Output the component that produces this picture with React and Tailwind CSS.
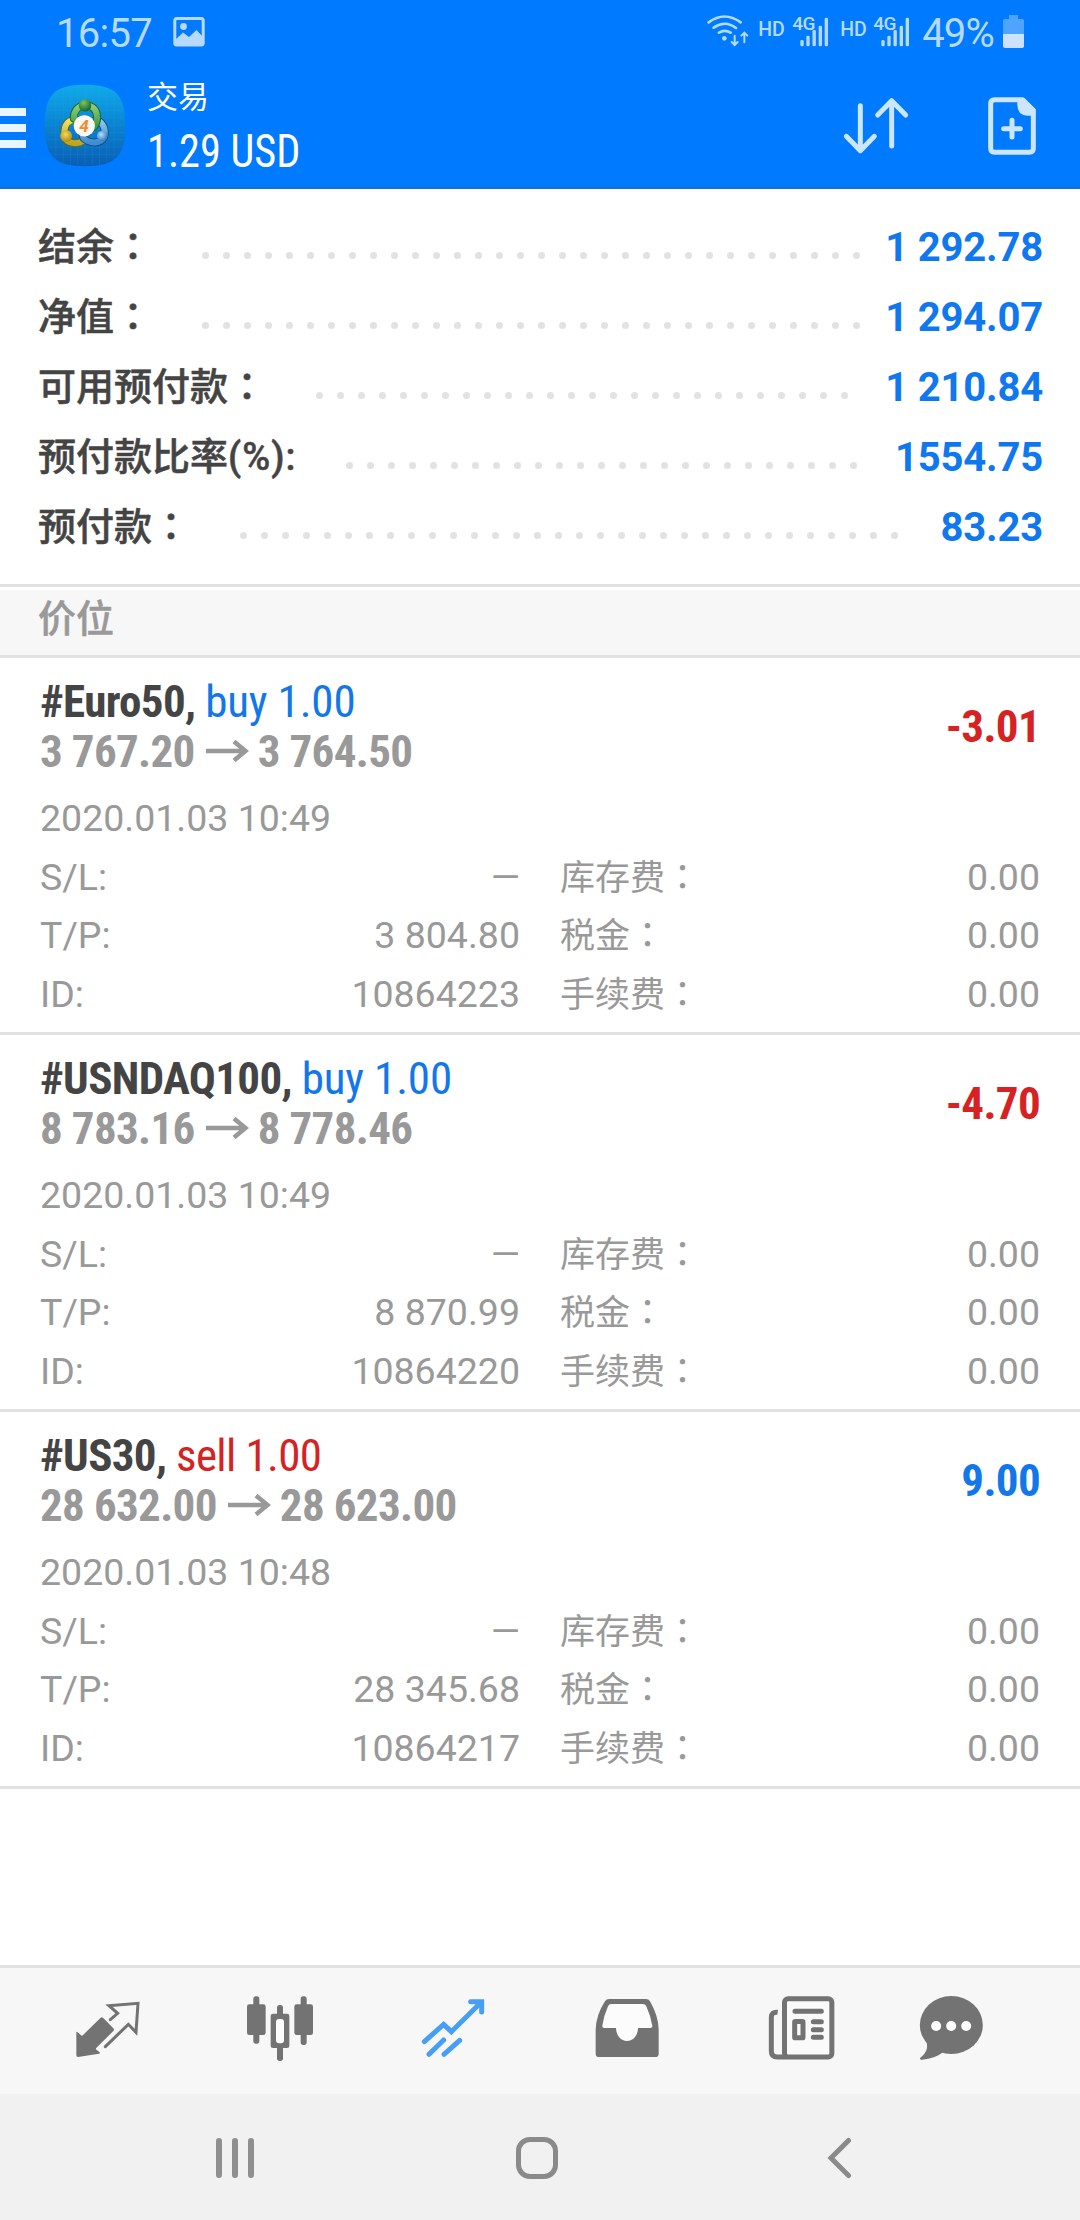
import React from 'react';

const account = [
  { label: '结余', wide: true, value: '1 292.78', dots: 32 },
  { label: '净值', wide: true, value: '1 294.07', dots: 32 },
  { label: '可用预付款', wide: true, value: '1 210.84', dots: 26 },
  { label: '预付款比率', suffix: '(%):', value: '1554.75', dots: 25 },
  { label: '预付款', wide: true, value: '83.23', dots: 32 },
];

const positions = [
  { symbol: '#Euro50,', side: 'buy', lots: '1.00', open: '3 767.20', now: '3 764.50', profit: '-3.01', time: '2020.01.03 10:49', tp: '3 804.80', id: '10864223' },
  { symbol: '#USNDAQ100,', side: 'buy', lots: '1.00', open: '8 783.16', now: '8 778.46', profit: '-4.70', time: '2020.01.03 10:49', tp: '8 870.99', id: '10864220' },
  { symbol: '#US30,', side: 'sell', lots: '1.00', open: '28 632.00', now: '28 623.00', profit: '9.00', time: '2020.01.03 10:48', tp: '28 345.68', id: '10864217' },
];

/* Full-width colon, centred in its cell */
function Colon() {
  return (
    <span lang="zh-TW" className="font-['Noto_Sans_CJK_TC',sans-serif] leading-[0]">
      ：
    </span>
  );
}

function Signal() {
  return (
    <div className="relative mt-[15px] h-8 w-[37px]">
      <span className="absolute left-0 top-[-1px] text-[19px] font-medium leading-none tracking-[-0.5px]">4G</span>
      <svg className="absolute left-2 top-0" width="29" height="33" viewBox="362 45 87 99" fill="currentColor">
        <rect x="363" y="120" width="10" height="19" rx="4" />
        <rect x="381" y="107" width="10" height="32" rx="4" />
        <rect x="399.500" y="90" width="10" height="49" rx="4" />
        <rect x="418" y="77" width="10" height="62" rx="4" />
        <rect x="436" y="53" width="10" height="86" rx="4" />
      </svg>
    </div>
  );
}

function StatusBar() {
  return (
    <div className="flex h-[62px] items-start text-[#b5dafd]">
      <span className="ml-[56px] mt-[14px] text-[40px] leading-none tracking-[-0.7px]">16:57</span>
      <svg className="ml-[21px] mt-4" width="32" height="31" viewBox="0 0 32 31">
        <rect x="1.800" y="2.600" width="28.400" height="26.400" rx="2" fill="none" stroke="currentColor" strokeWidth="3" />
        <circle cx="10.500" cy="10.500" r="3.400" fill="currentColor" />
        <path d="M2 24 L10 16.500 L16 21 L23.500 14 L30 21 V28.500 H2Z" fill="currentColor" />
      </svg>
      <div className="ml-auto flex items-start">
        <svg className="mt-[13px]" width="44" height="35" viewBox="80 39 132 105" fill="none" stroke="currentColor" strokeLinecap="round">
          <path strokeWidth="8" d="M88 67 Q135 32 184 67 M103 83 Q137 59 170 84 M119 98 Q136 87 154 98" />
          <circle cx="135" cy="115" r="7" fill="currentColor" stroke="none" />
          <path strokeWidth="6" d="M166 107V134 M157 126L166 135L175 126 M195 127V98 M186 107L195 98L204 107" />
        </svg>
        <span className="ml-2 mt-[20px] w-[34px] text-[19.500px] font-medium leading-none">HD</span>
        <Signal />
        <span className="ml-[11px] mt-[20px] w-[33px] text-[19.500px] font-medium leading-none">HD</span>
        <Signal />
        <span className="ml-3 mt-[14px] text-[40px] leading-none tracking-[-0.8px]">49%</span>
        <svg className="ml-[9px] mr-14 mt-[15px]" width="21" height="33" viewBox="0 0 21 33">
          <path d="M6 0H15V4H19.500Q21 4 21 5.500V19H0V5.500Q0 4 1.500 4H6Z" fill="#4fa4ff" />
          <path d="M0 19H21V31Q21 33 19 33H2Q0 33 0 31Z" fill="#cce2fc" />
        </svg>
      </div>
    </div>
  );
}

function AppLogo() {
  return (
    <svg className="ml-[18px] mt-[22px]" width="82" height="83" viewBox="22 24 248 250">
      <defs>
        <linearGradient id="tile" x1="0" y1="0" x2="0" y2="1">
          <stop offset="0" stopColor="#10aaea" />
          <stop offset="0.45" stopColor="#0a87d4" />
          <stop offset="1" stopColor="#0a5eb4" />
        </linearGradient>
        <linearGradient id="green" x1="0" y1="0" x2="0" y2="1">
          <stop offset="0" stopColor="#8fce7a" />
          <stop offset="1" stopColor="#3d9a45" />
        </linearGradient>
        <linearGradient id="yellow" x1="0" y1="0" x2="0" y2="1">
          <stop offset="0" stopColor="#ece36a" />
          <stop offset="1" stopColor="#bfa520" />
        </linearGradient>
        <linearGradient id="blue" x1="0" y1="0" x2="0" y2="1">
          <stop offset="0" stopColor="#8cc9ee" />
          <stop offset="1" stopColor="#3e8fd0" />
        </linearGradient>
        <radialGradient id="ballGreen" cx="0.4" cy="0.3" r="0.7">
          <stop offset="0" stopColor="#7cc462" />
          <stop offset="1" stopColor="#14672a" />
        </radialGradient>
        <radialGradient id="ballYellow" cx="0.45" cy="0.35" r="0.7">
          <stop offset="0" stopColor="#f5d95a" />
          <stop offset="1" stopColor="#a98512" />
        </radialGradient>
        <radialGradient id="ballBlue" cx="0.4" cy="0.35" r="0.7">
          <stop offset="0" stopColor="#b5e0fb" />
          <stop offset="1" stopColor="#2672b8" />
        </radialGradient>
      </defs>
      <path d="M146 26 C238 26 268 56 268 149 C268 242 238 272 146 272 C54 272 24 242 24 149 C24 56 54 26 146 26Z" fill="url(#tile)" />
      <path d="M58 45V252 M80 35V262 M102 30V268 M124 28V270 M146 28V270 M168 28V270 M190 30V268 M212 35V262 M234 45V252 M45 60H247 M35 82H257 M30 104H262 M28 126H264 M28 148H264 M28 170H264 M30 192H262 M35 214H257 M45 236H247" stroke="#48b4ee" strokeOpacity="0.25" strokeWidth="1.500" fill="none" />
      <g fill="none" strokeLinejoin="round">
        <path d="M118 132 C86 132 80 160 86 186 C90 202 122 208 140 196 C150 186 140 160 118 132Z" stroke="#5d6a1c" strokeWidth="24" />
        <path d="M118 132 C86 132 80 160 86 186 C90 202 122 208 140 196 C150 186 140 160 118 132Z" stroke="url(#yellow)" strokeWidth="18" />
        <path d="M176 134 C200 134 210 160 204 184 C194 206 160 204 142 188 C132 174 150 150 176 134Z" stroke="#1c4f86" strokeWidth="24" />
        <path d="M176 134 C200 134 210 160 204 184 C194 206 160 204 142 188 C132 174 150 150 176 134Z" stroke="url(#blue)" strokeWidth="18" />
        <path d="M112 128 C112 76 178 76 182 118 C184 132 180 144 174 152 C160 140 134 138 112 128Z" stroke="#1b6430" strokeWidth="24" />
        <path d="M112 128 C112 76 178 76 182 118 C184 132 180 144 174 152 C160 140 134 138 112 128Z" stroke="url(#green)" strokeWidth="18" />
      </g>
      <circle cx="146" cy="88" r="19" fill="url(#ballGreen)" />
      <circle cx="89" cy="181" r="18" fill="url(#ballYellow)" />
      <circle cx="198" cy="181" r="16" fill="url(#ballBlue)" />
      <circle cx="144" cy="150" r="32" fill="#fbf8f2" />
      <text x="143" y="168" textAnchor="middle" fontFamily="Roboto" fontSize="52" fontStyle="italic" fontWeight="700" fill="#f08a34">4</text>
    </svg>
  );
}

function TitleBar() {
  return (
    <div className="flex items-start text-white">
      <div className="mt-[46px] flex w-[26px] flex-col gap-2">
        <div className="h-2 bg-[#e8f5ff]" />
        <div className="h-2 bg-[#e8f5ff]" />
        <div className="h-2 bg-[#e8f5ff]" />
      </div>
      <AppLogo />
      <div className="ml-[21px] flex flex-col">
        <span className="mt-5 text-[31px] leading-none">交易</span>
        <span className="mt-[15px] origin-left scale-x-92 font-['Roboto_Condensed'] text-[46px] leading-none">1.29 USD</span>
      </div>
      <svg className="ml-auto mt-[33px]" width="70" height="60" viewBox="486 285 210 180" fill="none" stroke="#cce6ff" strokeWidth="15" strokeLinecap="round" strokeLinejoin="round">
        <path d="M541 317V450 M499 409L541 452L583 409 M635 438V303 M593 345L635 302L677 345" />
      </svg>
      <svg className="ml-[73px] mr-10 mt-[33px]" width="55" height="62" viewBox="915 285 165 186" fill="none" stroke="#cce6ff" strokeWidth="15" strokeLinecap="round">
        <path d="M1028 299H944Q932 299 932 311V445Q932 457 944 457H1048Q1060 457 1060 445V331Z" strokeLinejoin="round" />
        <path d="M1012 296H1034L1066 328V347H1042Q1012 345 1012 315Z" fill="#cce6ff" stroke="none" />
        <path d="M971 386H1021 M996 361V411" />
      </svg>
    </div>
  );
}

function AccountRow({ row }) {
  return (
    <div className="flex h-[70px] items-center pl-[38px] pr-[37px]">
      <span className="mt-[-2px] text-[38px] font-medium leading-none text-[#444] [-webkit-text-stroke:0.5px]">
        {row.label}
        {row.wide ? <Colon /> : <span className="tracking-[1px]">{row.suffix}</span>}
      </span>
      <div className="ml-[50px] mt-[15px] flex gap-[14px]">
        {Array.from({ length: row.dots }, (_, i) => (
          <i key={i} className="size-[7px] rounded-full bg-[#e2e2e2]" />
        ))}
      </div>
      <span className="ml-auto text-[40px] font-bold leading-none tracking-[-0.2px] text-[#0f78ee]">{row.value}</span>
    </div>
  );
}

function Detail({ label, value, fee }) {
  return (
    <>
      <span>{label}</span>
      <span className="text-right">{value}</span>
      <span className="pl-10 text-[35px] leading-[61px]">
        {fee}
        <Colon />
      </span>
      <span className="text-right">0.00</span>
    </>
  );
}

function Position({ p }) {
  const buy = p.side === 'buy';
  const gain = !p.profit.startsWith('-');
  return (
    <div className="h-[377px] border-b-3 border-[#e2e2e2] pl-10 pr-10 pt-[19px]">
      <div className="flex h-[100px] items-start justify-between font-['Roboto_Condensed'] text-[45px] leading-[50px] tracking-[-0.65px]">
        <div>
          <div className="whitespace-pre font-bold text-[#444]">
            {p.symbol}{' '}
            <span className={buy ? 'font-normal tracking-[-0.15px] text-[#1177ea]' : 'font-normal tracking-[-0.65px] text-[#d62222]'}>
              {p.side} {p.lots}
            </span>
          </div>
          <div className="flex items-center font-bold text-[#999]">
            {p.open}
            <svg className="ml-[11px] mr-[9px] mt-[-2px]" width="43" height="22" viewBox="0 0 43 22" fill="none" stroke="currentColor" strokeWidth="4.500">
              <path d="M0 11H40 M28 1.500L39.500 11L28 20.500" />
            </svg>
            {p.now}
          </div>
        </div>
        <span className={gain ? 'mt-[25px] font-bold text-[#1177ea]' : 'mt-[25px] font-bold text-[#d62222]'}>{p.profit}</span>
      </div>
      <div className="mt-3 text-[37.500px] leading-[58.500px] text-[#999]">
        <div>{p.time}</div>
        <div className="grid auto-rows-[58.500px] grid-cols-[100px_380px_260px_1fr]">
          <Detail label="S/L:" value="—" fee="库存费" />
          <Detail label="T/P:" value={p.tp} fee="税金" />
          <Detail label="ID:" value={p.id} fee="手续费" />
        </div>
      </div>
    </div>
  );
}

function TabBar() {
  return (
    <div className="flex h-[129px] items-start border-t-3 border-[#e2e2e2] bg-[#f7f7f7] pt-5 text-[#737373]">
      <svg className="ml-[68px]" width="80" height="80" viewBox="24 24 240 240">
        <path d="M49 158Q49 153 53 157L66 168L122 113Q125 110 129 113L160 145Q164 149 160 153L108 205Q107 209 111 211L118 216Q122 220 117 221L54 231Q49 231 49 226Z" fill="currentColor" />
        <path d="M151 119L173 100L147 77L234 70L228 157L205 133L136 200" fill="none" stroke="currentColor" strokeWidth="9" strokeLinecap="round" />
      </svg>
      <svg className="ml-[92px]" width="80" height="80" viewBox="540 24 240 240" fill="currentColor">
        <rect x="561" y="73" width="56" height="92" rx="7" />
        <rect x="580" y="49" width="18" height="142" rx="8" />
        <rect x="632" y="101" width="56" height="103" rx="7" />
        <rect x="651" y="75" width="18" height="168" rx="8" />
        <rect x="648" y="117" width="24" height="73" rx="9" fill="#fcfcfc" />
        <rect x="703" y="73" width="56" height="92" rx="7" />
        <rect x="722" y="49" width="18" height="146" rx="8" />
      </svg>
      <svg className="ml-[93px]" width="80" height="80" viewBox="39 24 240 240" fill="none" stroke="#479ef6" strokeWidth="15" strokeLinecap="round">
        <path d="M73 185L131 133L154 155L242 68 M212 65H245V96 M87 223L131 180 M132 223L179 181" />
      </svg>
      <svg className="ml-[95px]" width="80" height="80" viewBox="564 24 240 240">
        <path d="M627 57H738Q746 57 750 64Q776 110 776 150V221Q776 231 766 231H597Q587 231 587 221V150Q588 105 615 64Q619 57 627 57Z" fill="currentColor" />
        <path d="M634 72H728Q736 72 739 79Q752 108 757 137Q758 144 751 144H714A33 39 0 0 1 648 144H613Q606 144 607 137Q611 108 624 79Q627 72 634 72Z" fill="#fcfcfc" />
      </svg>
      <svg className="ml-[93px]" width="80" height="80" viewBox="33 24 240 240" fill="none" stroke="currentColor" strokeWidth="15">
        <rect x="103.500" y="56" width="142" height="175" rx="11" fill="#fafafa" />
        <path d="M83 97Q64 95 64 112V213Q64 231 82 231H112" />
        <path strokeLinecap="round" d="M135 94H214 M190 125H214 M190 149H214 M190 172H214" />
        <rect x="134" y="124.500" width="25" height="49" rx="2" />
      </svg>
      <svg className="ml-[70px]" width="80" height="80" viewBox="483 24 240 240">
        <ellipse cx="604" cy="135" rx="94.500" ry="87" fill="currentColor" />
        <path d="M526 178Q542 210 511 233Q507 239 517 239Q555 236 580 216Z" fill="currentColor" />
        <circle cx="558.500" cy="138" r="15" fill="#fff" />
        <circle cx="603.500" cy="138" r="15" fill="#fff" />
        <circle cx="648.500" cy="138" r="15" fill="#fff" />
      </svg>
    </div>
  );
}

function SystemNav() {
  return (
    <div className="flex h-[126px] items-center bg-[#f1f1f1] pt-[1px]">
      <div className="ml-[216px] flex gap-[10px]">
        <div className="h-10 w-[6px] rounded-full bg-[#8f8f8f]" />
        <div className="h-10 w-[6px] rounded-full bg-[#8f8f8f]" />
        <div className="h-10 w-[6px] rounded-full bg-[#8f8f8f]" />
      </div>
      <div className="ml-[262px] h-[42px] w-[42px] rounded-[14px] border-5 border-[#8a8a8a]" />
      <svg className="ml-[268px]" width="28" height="42" viewBox="0 0 28 42" fill="none" stroke="#8a8a8a" strokeWidth="5" strokeLinecap="round">
        <path d="M22.500 3.500L5 21L22.500 38.500" />
      </svg>
    </div>
  );
}

export default function App() {
  return (
    <div lang="zh-CN" className="flex h-[2220px] w-[1080px] flex-col overflow-hidden bg-white font-['Roboto','Noto_Sans_CJK_SC',sans-serif]">
      <header className="h-[189px] border-b-2 border-[#1c6fc6] bg-[#007aff]">
        <StatusBar />
        <TitleBar />
      </header>
      <section className="h-[398px] border-b-3 border-[#e2e2e2] pt-6">
        {account.map((row) => (
          <AccountRow key={row.label} row={row} />
        ))}
      </section>
      <h2 className="mt-[3px] flex h-[68px] items-center border-b-3 border-[#e2e2e2] bg-[#f7f7f7] pb-2 pl-[38px] text-[38px] font-medium leading-none text-[#999] [-webkit-text-stroke:0.5px]">价位</h2>
      <main className="flex-1">
        {positions.map((p) => (
          <Position key={p.id} p={p} />
        ))}
      </main>
      <TabBar />
      <SystemNav />
    </div>
  );
}
